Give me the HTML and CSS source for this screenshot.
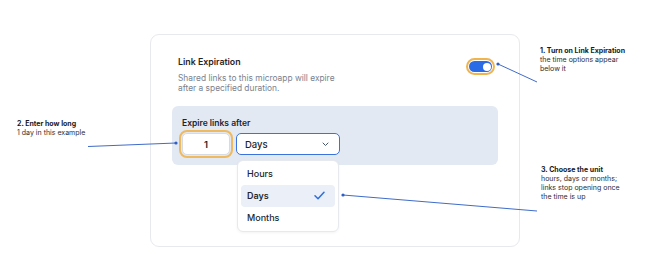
FILE: index.html
```html
<!DOCTYPE html>
<html lang="en">
<head>
    <meta charset="UTF-8">
    <meta name="viewport" content="width=device-width, initial-scale=1.0">
    <title>Link Expiration</title>
    <link rel="stylesheet" href="styles.css">
</head>
<body>
    <div class="page">
        <div class="card">
            <div class="card-head">
                <div>
                    <h2 class="title">Link Expiration</h2>
                    <p class="desc">Shared links to this microapp will expire<br>after a specified duration.</p>
                </div>
                <div class="toggle"><span class="knob"></span></div>
            </div>
            <div class="panel">
                <div class="panel-label">Expire links after</div>
                <div class="row">
                    <div class="num">1</div>
                    <div class="select">
                        <span>Days</span>
                        <svg class="chev" width="7" height="5" viewBox="0 0 7 5"><path d="M1 1l2.5 2.5L6 1" fill="none" stroke="#475569" stroke-width="1" stroke-linecap="round" stroke-linejoin="round"/></svg>
                        <div class="menu">
                            <div class="item">Hours</div>
                            <div class="item active">Days
                                <svg width="11" height="9" viewBox="0 0 11 9"><path d="M1 4.8l3 3L10 1.2" fill="none" stroke="#2f6fe0" stroke-width="1.5" stroke-linecap="round" stroke-linejoin="round"/></svg>
                            </div>
                            <div class="item">Months</div>
                        </div>
                    </div>
                </div>
            </div>
        </div>

        <div class="note note-1"><b>1. Turn on Link Expiration</b><br>the time options appear<br>below it</div>
        <div class="note note-2"><b>2. Enter how long</b><br>1 day in this example</div>
        <div class="note note-3"><b>3. Choose the unit</b><br>hours, days or months;<br>links stop opening once<br>the time is up</div>

        <svg class="lines" width="670" height="265" viewBox="0 0 670 265">
            <g stroke="#3f6cc9" stroke-width="1" fill="none">
                <line x1="498" y1="64" x2="537" y2="82"/>
                <line x1="88" y1="146.5" x2="176" y2="143"/>
                <line x1="343" y1="195" x2="537" y2="211"/>
            </g>
            <g fill="#2f5fc4">
                <circle cx="498" cy="64" r="1.6"/>
                <circle cx="176" cy="143" r="1.6"/>
                <circle cx="343" cy="195" r="1.6"/>
            </g>
        </svg>
    </div>
</body>
</html>
```

FILE: styles.css
```css
body {
    margin: 0;
    background: #fff;
    font-family: Inter, "Liberation Sans", sans-serif;
    color: #1e232b;
}

.page {
    position: relative;
    width: 670px;
    height: 265px;
    padding: 34px 0 0 150px;
    box-sizing: border-box;
}

.card {
    width: 370px;
    box-sizing: border-box;
    padding: 21px 27px 81px;
    border: 1px solid #e7e9ee;
    border-radius: 9px;
    background: #fff;
}

.card-head {
    display: flex;
    justify-content: space-between;
    align-items: flex-start;
}

.title {
    margin: 0;
    font-size: 8.8px;
    line-height: 12px;
    font-weight: 600;
    color: #1f242c;
}

.desc {
    margin: 5px 0 0;
    font-size: 8.4px;
    line-height: 10px;
    color: #7a8290;
}

.toggle {
    position: relative;
    width: 23px;
    height: 11px;
    margin-top: 5px;
    border-radius: 6px;
    background: #2b6be6;
    outline: 2px solid #f0b44e;
    outline-offset: 1px;
}

.knob {
    position: absolute;
    right: 1.5px;
    top: 1.5px;
    width: 8px;
    height: 8px;
    border-radius: 50%;
    background: #fff;
}

.panel {
    margin: 13px -6px 0;
    padding: 11px 10px 10px;
    background: #e3e9f2;
    border-radius: 6px;
}

.panel-label {
    font-size: 8.5px;
    line-height: 12px;
    font-weight: 600;
    color: #1f242c;
}

.row {
    display: flex;
    gap: 6px;
    margin-top: 4px;
}

.num {
    width: 48px;
    height: 22px;
    box-sizing: border-box;
    display: flex;
    align-items: center;
    justify-content: center;
    background: #fff;
    border: 1px solid #d6dbe3;
    border-radius: 5px;
    outline: 2px solid #efb95f;
    outline-offset: 1px;
    font-size: 9.5px;
    font-weight: 600;
}

.select {
    position: relative;
    width: 104px;
    height: 22px;
    box-sizing: border-box;
    display: flex;
    align-items: center;
    justify-content: space-between;
    padding: 0 10px 0 8px;
    background: #fff;
    border: 1.5px solid #3a73dd;
    border-radius: 5px;
    font-size: 9.5px;
    font-weight: 500;
}

.menu {
    position: absolute;
    top: 25.5px;
    left: 0;
    width: 102px;
    box-sizing: border-box;
    padding: 2px 3px;
    background: #fff;
    border: 1px solid #e6e9ee;
    border-radius: 6px;
    box-shadow: 0 1px 3px rgba(15, 23, 42, 0.05);
}

.item {
    height: 22px;
    display: flex;
    align-items: center;
    justify-content: space-between;
    padding: 0 10px 0 6px;
    font-size: 9px;
    font-weight: 500;
    color: #22272f;
}

.item.active {
    background: #ebeff7;
    border-radius: 4px;
    font-weight: 600;
}

.note {
    position: absolute;
    font-size: 7px;
    line-height: 9px;
    color: #2a2e35;
}

.note b {
    font-weight: 700;
    color: #16191e;
}

.note-1 { left: 540px; top: 46px; }
.note-2 { left: 17px; top: 119px; }
.note-3 { left: 541px; top: 165px; }

.lines {
    position: absolute;
    left: 0;
    top: 0;
    pointer-events: none;
}
```
